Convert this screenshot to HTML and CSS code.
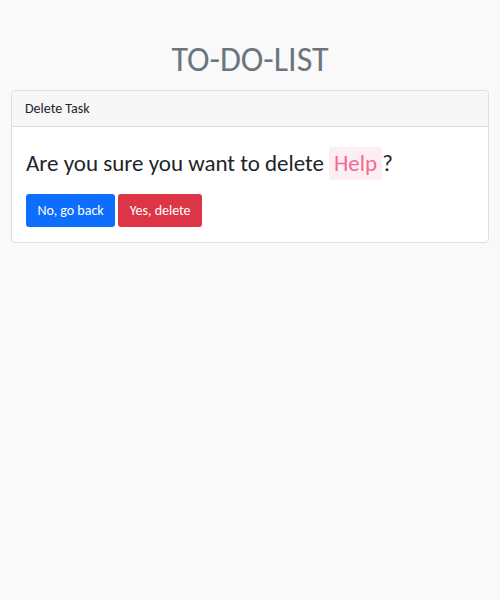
FILE: index.html
```html
<!DOCTYPE html>
<html>
<head>
<meta charset="utf-8">
<link rel="stylesheet" href="styles.css">
</head>
<body>
<div class="page">
  <h1 class="title">TO-DO-LIST</h1>
  <div class="card">
    <div class="card-header">Delete Task</div>
    <div class="card-body">
      <h3 class="question"><span>Are you sure you want to delete</span><span class="task">Help</span><span>?</span></h3>
      <div class="actions">
        <button class="btn btn-blue">No, go back</button>
        <button class="btn btn-red">Yes, delete</button>
      </div>
    </div>
  </div>
</div>
</body>
</html>
```
FILE: styles.css
```css
html, body {
  margin: 0;
  padding: 0;
  background: #f9f9f9;
}
body {
  font-family: Carlito, Lato, sans-serif;
  color: #212529;
}
.page {
  padding: 40px 11px 0;
  display: flex;
  flex-direction: column;
}
.title {
  margin: 0 0 10px;
  text-align: center;
  font-family: Carlito, Lato, sans-serif;
  font-weight: 400;
  font-size: 34px;
  line-height: 40px;
  color: #6c757d;
}
.card {
  background: #fff;
  border: 1px solid #dedede;
  border-radius: 4px;
  overflow: hidden;
}
.card-header {
  background: #f7f7f7;
  border-bottom: 1px solid #dedede;
  height: 35px;
  padding: 0 13px;
  display: flex;
  align-items: center;
  font-size: 14px;
}
.card-body {
  padding: 20px 14px 15px;
  display: flex;
  flex-direction: column;
  gap: 14px;
}
.question {
  margin: 0;
  font-family: Carlito, Lato, sans-serif;
  font-weight: 400;
  font-size: 23px;
  line-height: 33px;
  height: 33px;
  display: flex;
  align-items: center;
}
.task {
  background: #fdeef2;
  color: #f06c96;
  padding: 0 5px;
  margin-left: 5px;
  border-radius: 3px;
}
.actions {
  display: flex;
  gap: 3px;
}
.btn {
  border: 0;
  border-radius: 3px;
  height: 33px;
  padding: 0 11.5px;
  font-family: Carlito, Lato, sans-serif;
  font-size: 14px;
  color: #fff;
}
.btn-blue { background: #0d6efd; }
.btn-red { background: #dc3545; }
```
